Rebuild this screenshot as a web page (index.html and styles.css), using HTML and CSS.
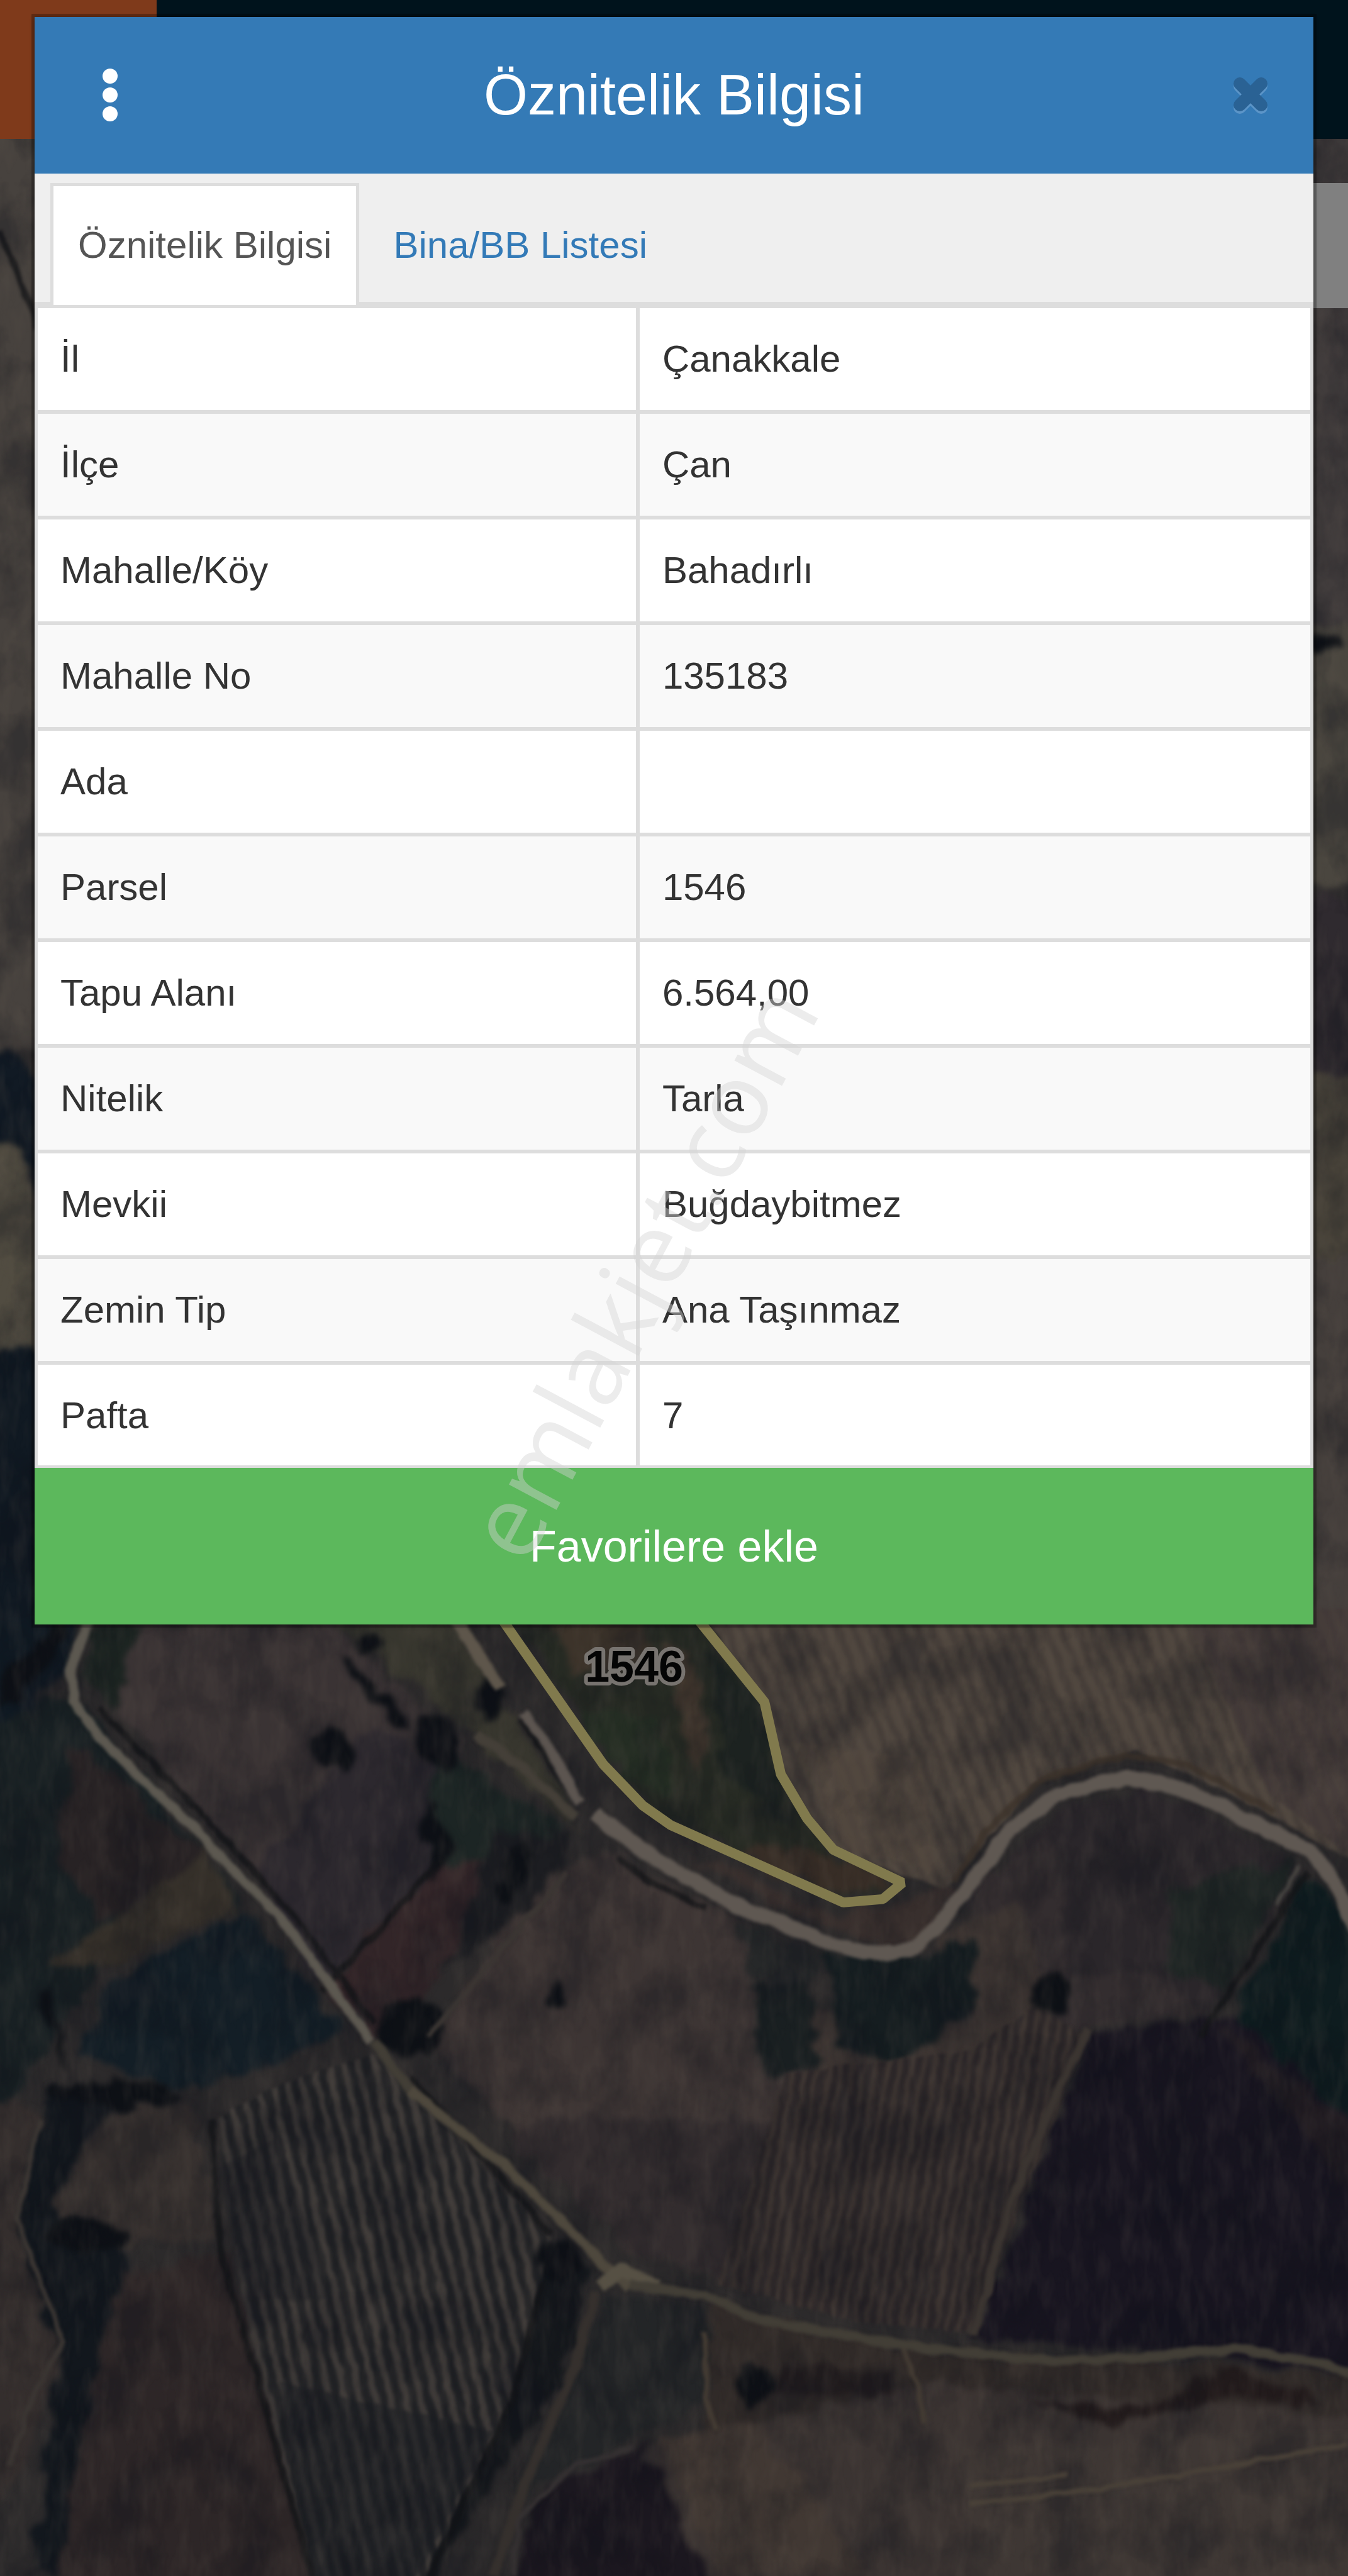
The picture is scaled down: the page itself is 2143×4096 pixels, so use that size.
FILE: index.html
```html
<!DOCTYPE html>
<html lang="tr">

<head>
    <meta charset="UTF-8">
    <meta name="viewport" content="width=device-width, initial-scale=1.0">
    <title>Öznitelik Bilgisi</title>
    <link rel="stylesheet" href="styles.css">
</head>

<body>
    <!-- Map behind the dialog -->
    <div class="map">
        <svg class="map-canvas" viewBox="0 0 820 1568" preserveAspectRatio="none" aria-hidden="true">
            <defs>
                <filter id="rough" x="-5%" y="-5%" width="110%" height="110%" color-interpolation-filters="sRGB">
                    <feTurbulence type="fractalNoise" baseFrequency="0.06" numOctaves="4" seed="4" result="n" />
                    <feDisplacementMap in="SourceGraphic" in2="n" scale="16" xChannelSelector="R" yChannelSelector="G" />
                    <feGaussianBlur stdDeviation="1.8" />
                </filter>
                <filter id="soft" x="-5%" y="-5%" width="110%" height="110%" color-interpolation-filters="sRGB">
                    <feTurbulence type="fractalNoise" baseFrequency="0.08" numOctaves="2" seed="9" result="n" />
                    <feDisplacementMap in="SourceGraphic" in2="n" scale="4" xChannelSelector="R" yChannelSelector="G" />
                    <feGaussianBlur stdDeviation="1" />
                </filter>
                <filter id="grainDark" x="0" y="0" width="100%" height="100%" color-interpolation-filters="sRGB">
                    <feTurbulence type="fractalNoise" baseFrequency="0.03 0.025" numOctaves="5" seed="2" />
                    <feColorMatrix values="0 0 0 0 0.05  0 0 0 0 0.06  0 0 0 0 0.09  3 0 0 0 -1.2" />
                </filter>
                <filter id="grainLight" x="0" y="0" width="100%" height="100%" color-interpolation-filters="sRGB">
                    <feTurbulence type="fractalNoise" baseFrequency="0.12 0.04" numOctaves="3" seed="7" />
                    <feColorMatrix values="0 0 0 0 0.42  0 0 0 0 0.38  0 0 0 0 0.34  0 2 0 0 -0.8" />
                </filter>
                <pattern id="rows" width="9" height="40" patternUnits="userSpaceOnUse" patternTransform="rotate(-13)">
                    <rect width="9" height="40" fill="#202124" />
                    <rect width="4" height="40" fill="#3e3a38" />
                </pattern>
                <pattern id="furrow" width="9" height="40" patternUnits="userSpaceOnUse" patternTransform="rotate(-22)">
                    <rect width="9" height="40" fill="#50473f" />
                    <rect width="4" height="40" fill="#463e39" />
                </pattern>
                <pattern id="furrowLow" width="7" height="40" patternUnits="userSpaceOnUse" patternTransform="rotate(10)">
                    <rect width="7" height="40" fill="#2b2628" />
                    <rect width="3" height="40" fill="#3b3330" />
                </pattern>
            </defs>

            <rect width="820" height="1568" fill="#2c2a2b" />

            <!-- Fields -->
            <g filter="url(#rough)">
                <path fill="#47423e" d="M-10 80H30V640H-10z" />
                <path fill="#111a24" d="M-10 640L10 642L30 665V740L12 700L-10 690z" />
                <path fill="#514c41" d="M-10 690L12 700L30 750V825H-10z" />
                <path fill="#101922" d="M-10 822H30V995H-10z" />
                <path fill="#413c3c" d="M790 80H830V380H790z" />
                <path fill="#4a463f" d="M790 380H830V545L790 535z" />
                <path fill="#2f2a2f" d="M790 535L830 555V655H790z" />
                <path fill="#474239" d="M790 655H830V775L790 765z" />
                <path fill="#453f3c" d="M790 765H830V1000H790z" />

                <path fill="#101a23" d="M-10 985H50L38 1020L0 1060H-10z" />
                <path fill="#182023" d="M-10 1050L42 1030L150 1160L60 1200L0 1290H-10z" />
                <path fill="#272224" d="M45 1060L130 1135L60 1170L35 1130z" />
                <path fill="#3a3334" d="M85 988L200 988L280 1060L272 1130L196 1205L150 1135L70 1040z" />
                <path fill="#2c282e" d="M225 1050L275 1080L265 1140L195 1208L155 1140z" />
                <path fill="#1c2421" d="M58 990H85L70 1040L50 1020z" />
                <path fill="#37362e" d="M200 985H275L345 1095L350 1115L280 1050z" />
                <path fill="#342f29" d="M30 1195L125 1128L145 1162L60 1200z" />
                <path fill="#131e26" d="M62 1210L148 1163L208 1235L150 1262L100 1272L48 1250z" />
                <path fill="#1c2524" d="M262 1060L345 1115L330 1140L262 1130z" />
                <path fill="#322528" d="M196 1212L268 1132L335 1135L290 1170L240 1235L228 1238z" />
                <path fill="#1c1d21" d="M300 1115L350 1118L325 1160L270 1200z" />
                <path fill="#3d3534" d="M375 1130L470 1180L490 1265L450 1390L385 1372L262 1245L300 1180L345 1135z" />
                <path fill="#322c2e" d="M330 1290L470 1290L448 1388L388 1372L310 1300z" />

                <path fill="#262a23" d="M312 985H425L465 1036L475 1080L508 1127L548 1146L513 1158L391 1099z" />
                <path fill="#242d23" d="M350 1040L400 1045L410 1090L380 1085z" />
                <path fill="#3c332a" d="M335 985H390L400 1015L350 1020z" />
                <path fill="#40362d" d="M400 1000L420 1005L432 1050L425 1085L412 1040z" />
                <path fill="#1c2220" d="M432 1000L462 1036L472 1085L480 1110L440 1080z" />
                <path fill="#372d26" d="M470 1120L510 1130L545 1146L510 1155L450 1130z" />

                <path fill="#382f2d" d="M412 1125L510 1165L555 1158L565 1150L585 1150L560 1185L540 1185L470 1160z" />
                <path fill="#2a262a" d="M605 1140L650 1098L700 1090L795 1135L735 1225L650 1205z" />
                <path fill="#1e2524" d="M715 1150L790 1130L745 1215L710 1200z" />
                <path fill="#332d2f" d="M590 1150L640 1115L650 1205L700 1200L735 1225L640 1235L600 1220z" />
                <path fill="#0e1c1f" d="M797 1140L832 1180V1310L745 1235z" />
                <path fill="#3d3532" d="M570 1180L620 1155L640 1230L590 1260L500 1265L490 1220L555 1250z" />
                <path fill="#181520" d="M664 1238L750 1225L832 1300V1445L700 1430L592 1424z" />
                <path fill="#201b21" d="M740 1230L832 1300V1350z" />
                <path fill="#151d20" d="M502 1190L560 1190L592 1180L596 1222L545 1256L508 1246z" />
                <path fill="#191f21" d="M458 1208L494 1206L498 1258L464 1262z" />
                <path fill="#262829" d="M450 1170L500 1190L495 1210L455 1205z" />

                <path fill="#342e2d" d="M-10 1275L24 1285L10 1350L38 1430L15 1500L-10 1530z" />
                <path fill="#12171d" d="M30 1272L70 1278L30 1340L78 1370L70 1460L45 1568H20L35 1430L8 1350z" />
                <path fill="#37312f" d="M65 1285L115 1280L132 1362L80 1366L30 1345z" />
                <path fill="#2d2627" d="M72 1385L140 1372L195 1575H35L50 1480z" />
                <path fill="#15181c" d="M322 1365L362 1378L345 1440L262 1575H235L305 1470z" />
                <path fill="#232527" d="M368 1398L432 1402L432 1460L335 1510L312 1520z" />
                <path fill="#1b171f" d="M312 1575L325 1520L390 1488L440 1575z" />
                <path fill="#302a28" d="M432 1402L550 1430L832 1445V1480L430 1480z" />
                <path fill="#3b3432" d="M392 1490L560 1450L832 1470V1580H435z" />
                <path fill="#413833" d="M400 1485L460 1475L530 1568H440z" />
                <path fill="#3e3734" d="M580 1490L832 1478V1580H600z" />
                <path fill="#241e1f" d="M478 1440L545 1445L545 1455L470 1460z" />
                <path fill="#211a1b" d="M620 1460L690 1465L750 1442L800 1460L805 1466L750 1458L680 1478z" />
            </g>

            <!-- Ploughed fields -->
            <g filter="url(#soft)">
                <path fill="url(#furrow)" d="M425 980H835V1140L760 1098L690 1065L630 1085L575 1150L508 1127L475 1080L465 1036z" />
                <path fill="#403838" d="M720 980H835V1140L770 1090z" opacity="0.7" />
                <path fill="#51473f" d="M480 1060L560 1070L570 1140L515 1125z" opacity="0.7" />
                <path fill="url(#furrowLow)" d="M478 1262L590 1248L630 1220L660 1240L592 1420L520 1413L436 1390z" />
                <path fill="url(#rows)" d="M132 1290L170 1268L228 1250L335 1362L312 1460L255 1575H190L148 1400z" />
                <path fill="#1c1e23" d="M170 1450L300 1480L250 1575H190z" opacity="0.6" />
                <path fill="#1c1e23" d="M132 1320L170 1300L200 1400L150 1400z" opacity="0.4" />
            </g>

            <!-- Tree lines and bushes -->
            <g filter="url(#rough)" fill="#0d1015">
                <ellipse cx="203" cy="1065" rx="13" ry="14" />
                <ellipse cx="225" cy="1001" rx="8" ry="6" />
                <ellipse cx="300" cy="1035" rx="11" ry="13" />
                <ellipse cx="250" cy="1235" rx="20" ry="18" />
                <ellipse cx="266" cy="1060" rx="11" ry="18" />
                <ellipse cx="338" cy="1216" rx="5" ry="9" />
                <ellipse cx="461" cy="1450" rx="13" ry="14" />
                <ellipse cx="640" cy="1215" rx="10" ry="14" />
                <ellipse cx="70" cy="1275" rx="42" ry="8" />
                <ellipse cx="52" cy="1360" rx="22" ry="10" />
                <ellipse cx="340" cy="1375" rx="14" ry="12" />
                <ellipse cx="806" cy="392" rx="12" ry="5" />
                <path d="M208 1008L250 1045L245 1055L210 1020z" />
                <path d="M0 1040L22 1025L45 990L38 985L0 1020z" />
                <path d="M28 1205L38 1240L48 1262L36 1250L24 1215z" />
                <path d="M262 1090L275 1120L265 1145L256 1120z" />
                <path d="M318 1120L326 1128L310 1160L302 1150z" />
            </g>
            <g filter="url(#soft)" fill="none" stroke="#131417" stroke-width="4" opacity="0.8">
                <path d="M60 1040L130 1112L178 1165L228 1232" />
                <path d="M268 1132L230 1175L196 1212" />
                <path d="M0 140L10 165L24 200" />
                <path d="M128 1290L134 1370L190 1568" />
                <path d="M316 1046L340 1080L353 1098" />
                <path d="M795 1140L730 1240" />
                <path d="M375 1130L395 1145L430 1162" />
                <path d="M250 1265L300 1320L335 1360" />
                <path d="M330 1390L312 1460L262 1568" />
            </g>

            <rect width="820" height="1568" filter="url(#grainDark)" opacity="0.3" />
            <rect width="820" height="1568" filter="url(#grainLight)" opacity="0.16" />

            <!-- Roads -->
            <g filter="url(#soft)" fill="none" stroke-linejoin="round">
                <path stroke="#3a3128" stroke-width="4" d="M580 1145L605 1108L636 1082L684 1068L722 1074L775 1103" opacity="0.7" />
                <path stroke="#5c5850" stroke-width="6" d="M54 985L43 1017L45 1036L60 1057L118 1113L171 1168L226 1243" />
                <path stroke="#4e483d" stroke-width="6" d="M249 1272L310 1321L341 1351L367 1378L384 1393" />
                <path stroke="#565044" stroke-width="8" d="M365 1392L378 1382L400 1392" />
                <path stroke="#423e36" stroke-width="6" d="M228 1243L249 1272M384 1391L429 1397L461 1412L513 1421L553 1428L637 1437L697 1435L750 1430L797 1437L825 1446" />
                <path stroke="#5e564b" stroke-width="8" d="M275 982L297 1017L305 1027" />
                <path stroke="#5c5550" stroke-width="6" d="M318 1042L335 1066L353 1098" />
                <path stroke="#443f38" stroke-width="6" d="M290 1055L320 1078L350 1106" />
                <path stroke="#5f5852" stroke-width="9" d="M362 1104L388 1124L411 1139L447 1159L500 1181L527 1189L545 1189L558 1184L571 1172L592 1145L615 1113L644 1092L684 1082L718 1088L750 1103L797 1127L812 1145L825 1175" />
                <path stroke="#4a4844" stroke-width="2" d="M790 1136L777 1160" />
                <path stroke="#3b3531" stroke-width="5" d="M662 1235L640 1280L615 1340L592 1422" />
                <path stroke="#35302d" stroke-width="6" d="M362 1395L350 1440L320 1510L300 1568" />
                <path stroke="#353132" stroke-width="3" d="M312 1568L316 1532L350 1500L385 1490" />
                <path stroke="#433b33" stroke-width="3" d="M550 1430L558 1452L562 1475M428 1420L430 1460L436 1480" />
                <path stroke="#494138" stroke-width="3" d="M590 1524L660 1516L720 1506L820 1488M590 1513L650 1507" />
                <path stroke="#3b3633" stroke-width="3" d="M24 1290L10 1350L38 1425L20 1460L5 1500M260 1240L345 1140" />
            </g>

            <!-- Parcel outline -->
            <path fill="none" stroke="#817a4d" stroke-width="6" stroke-linejoin="bevel"
                d="M300 978L367 1074L391 1099L408 1111L513 1158L537 1156L549 1146L507 1126L491 1107L475 1080L465 1036L420 980" />
        </svg>
        <div class="topbar">
            <div class="topbar-menu"></div>
        </div>
        <div class="map-control"></div>
        <svg class="map-labels" viewBox="0 0 2143 4096">
            <text class="parcel-no" x="1008" y="2674">1546</text>
        </svg>
    </div>

    <div class="dialog" role="dialog" aria-labelledby="dialog-title">
        <header class="dialog-header">
            <button class="icon-btn" type="button" aria-label="Menü">
                <svg class="icon-dots" viewBox="0 0 24 84">
                    <circle cx="12" cy="12" r="12" />
                    <circle cx="12" cy="42" r="12" />
                    <circle cx="12" cy="72" r="12" />
                </svg>
            </button>
            <h1 class="dialog-title" id="dialog-title">Öznitelik Bilgisi</h1>
            <button class="icon-btn btn-close" type="button" aria-label="Kapat">
                <svg class="icon-close" viewBox="0 0 60 66">
                    <path class="close-shine" d="M13 19L47 53M47 19L13 53" />
                    <path class="close-cross" d="M13 15L47 49M47 15L13 49" />
                </svg>
            </button>
        </header>

        <ul class="tabs">
            <li><a class="tab active" href="#oznitelik">Öznitelik Bilgisi</a></li>
            <li><a class="tab" href="#bina">Bina/BB Listesi</a></li>
        </ul>

        <table class="info" id="oznitelik">
            <tbody>
                <tr><th scope="row">İl</th><td>Çanakkale</td></tr>
                <tr><th scope="row">İlçe</th><td>Çan</td></tr>
                <tr><th scope="row">Mahalle/Köy</th><td>Bahadırlı</td></tr>
                <tr><th scope="row">Mahalle No</th><td>135183</td></tr>
                <tr><th scope="row">Ada</th><td></td></tr>
                <tr><th scope="row">Parsel</th><td>1546</td></tr>
                <tr><th scope="row">Tapu Alanı</th><td>6.564,00</td></tr>
                <tr><th scope="row">Nitelik</th><td>Tarla</td></tr>
                <tr><th scope="row">Mevkii</th><td>Buğdaybitmez</td></tr>
                <tr><th scope="row">Zemin Tip</th><td>Ana Taşınmaz</td></tr>
                <tr><th scope="row">Pafta</th><td>7</td></tr>
            </tbody>
        </table>

        <button class="btn-favorite" type="button">Favorilere ekle</button>
    </div>

    <!-- Watermark -->
    <svg class="watermark" viewBox="0 0 2143 4096">
        <text transform="translate(836 2492) rotate(-62)">emlakjet.com</text>
    </svg>
</body>

</html>
```

FILE: styles.css
```css
* {
    box-sizing: border-box;
}

body {
    margin: 0;
    min-height: 100vh;
    padding: 27px 55px;
    background: #2a282a;
    color: #333;
    font-family: "Helvetica Neue", Helvetica, "Liberation Sans", Arial, sans-serif;
    font-size: 60px;
    line-height: 86px;
}

/* Map */
.map {
    position: absolute;
    inset: 0;
    overflow: hidden;
}

.map-canvas,
.map-labels,
.watermark {
    position: absolute;
    top: 0;
    left: 0;
    width: 100%;
    height: 100%;
}

.topbar {
    position: relative;
    height: 221px;
    background: #00131c;
}

.topbar-menu {
    width: 249px;
    height: 100%;
    background: #7f3a1b;
}

.map-control {
    position: absolute;
    top: 291px;
    right: 0;
    width: 200px;
    height: 199px;
    background: #808080;
}

.parcel-no {
    font-size: 70px;
    font-weight: bold;
    text-anchor: middle;
    fill: #050505;
    stroke: #77736f;
    stroke-width: 12px;
    stroke-linejoin: round;
    paint-order: stroke;
}

/* Dialog */
.dialog {
    position: relative;
    background: #fff;
    box-shadow: 0 0 0 5px rgba(0, 0, 0, 0.25), 0 2px 8px rgba(0, 0, 0, 0.3);
}

.dialog-header {
    display: flex;
    justify-content: space-between;
    align-items: center;
    height: 249px;
    padding: 0 70px 2px;
    background: #347ab6;
}

.dialog-title {
    margin: 0;
    color: #fff;
    font-size: 90px;
    font-weight: normal;
    line-height: 100px;
}

.icon-btn {
    display: flex;
    justify-content: center;
    align-items: center;
    width: 100px;
    height: 100px;
    padding: 0;
    border: none;
    background: none;
    cursor: pointer;
}

.btn-close {
    justify-content: flex-end;
}

.icon-dots {
    height: 84px;
    fill: #fff;
}

.icon-close {
    width: 60px;
    height: 66px;
    fill: none;
    stroke-width: 20px;
    stroke-linecap: round;
}

.close-shine {
    stroke: #5c95c8;
}

.close-cross {
    stroke: #2a6294;
}

/* Tabs */
.tabs {
    display: flex;
    gap: 10px;
    height: 209px;
    margin: 0;
    padding: 15px 25px 0;
    list-style: none;
    background: #efefef;
    box-shadow: inset 0 -5px #ddd;
}

.tab {
    display: block;
    height: 100%;
    padding: 51px 39px;
    border: 5px solid transparent;
    border-bottom: none;
    color: #337ab7;
    text-decoration: none;
}

.tab.active {
    border-color: #ddd;
    background: #fff;
    color: #555;
}

/* Attribute table */
.info {
    width: 100%;
    border-collapse: separate;
    border-spacing: 0;
    border: 5px solid #ddd;
    border-bottom: none;
    background: #fff;
}

.info th,
.info td {
    height: 168px;
    padding: 38px 36px;
    border-bottom: 6px solid #ddd;
    font-weight: normal;
    text-align: left;
}

.info th {
    width: 47.3%;
    border-right: 6px solid #ddd;
}

.info tr:nth-child(even) {
    background: #f9f9f9;
}

.info tr:last-child th,
.info tr:last-child td {
    height: 164px;
    padding-bottom: 36px;
    border-bottom-width: 4px;
}

.btn-favorite {
    display: block;
    width: 100%;
    height: 249px;
    border: none;
    background: #5cb85c;
    color: #fff;
    font-family: inherit;
    font-size: 70px;
    cursor: pointer;
}

.watermark {
    pointer-events: none;
}

.watermark text {
    font-family: "Open Sans", "Noto Sans", sans-serif;
    font-size: 160px;
    fill: rgba(211, 211, 211, 0.43);
}
```
